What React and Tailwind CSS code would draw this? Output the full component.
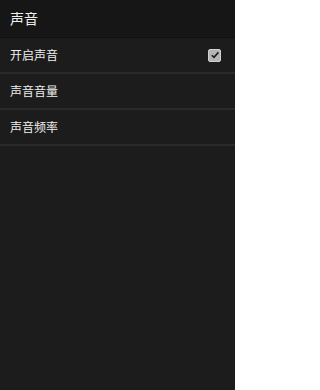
import React from 'react';

const font = { fontFamily: '"Noto Sans CJK SC", "Noto Sans", sans-serif' };

const rows = [
  { label: '开启声音', checked: true },
  { label: '声音音量' },
  { label: '声音频率' },
];

const Check = () => (
  <div className="w-[13px] h-[13px] rounded-[2px] bg-[#b4b4b4] border border-[#d0d0d0] flex items-center justify-center">
    <svg width="10" height="10" viewBox="0 0 10 10">
      <path d="M1.8 5.2 L4 7.4 L8.4 2.4" fill="none" stroke="#1c1c1c" strokeWidth="1.6" />
    </svg>
  </div>
);

export default function App() {
  return (
    <div className="w-[235px] h-[390px] bg-[#1c1c1c] text-[#eeeeee] overflow-hidden" style={font}>
      <div className="h-[37px] bg-[#161616] flex items-center px-[10px] text-[14px]">声音</div>
      <div className="border-t border-[#101010]">
        {rows.map((r) => (
          <div key={r.label} className="h-[36px] flex items-center justify-between pl-[10px] pr-[14px] border-b-2 border-[#2a2a2a] text-[12px]">
            <span>{r.label}</span>
            {r.checked && <Check />}
          </div>
        ))}
      </div>
    </div>
  );
}
